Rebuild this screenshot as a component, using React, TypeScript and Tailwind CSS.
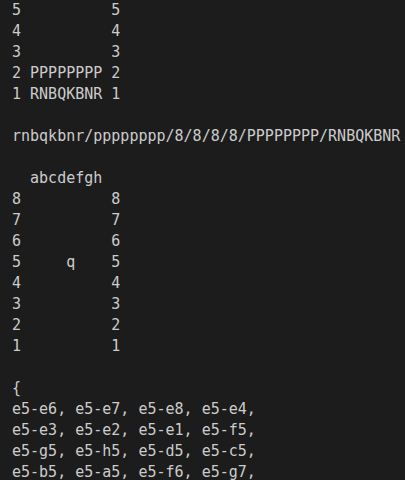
const lines = [
  '5          5',
  '4          4',
  '3          3',
  '2 PPPPPPPP 2',
  '1 RNBQKBNR 1',
  '',
  'rnbqkbnr/pppppppp/8/8/8/8/PPPPPPPP/RNBQKBNR',
  '',
  '  abcdefgh',
  '8          8',
  '7          7',
  '6          6',
  '5     q    5',
  '4          4',
  '3          3',
  '2          2',
  '1          1',
  '',
  '{',
  'e5-e6, e5-e7, e5-e8, e5-e4,',
  'e5-e3, e5-e2, e5-e1, e5-f5,',
  'e5-g5, e5-h5, e5-d5, e5-c5,',
  'e5-b5, e5-a5, e5-f6, e5-g7,',
];

const App = () => {
  return (
    <div className="w-[405px] h-[480px] overflow-hidden bg-[#1c1c1c] text-[#cccccc] pl-3">
      <pre className="font-['DejaVu_Sans_Mono',monospace] text-[15px] leading-[21px] whitespace-pre">
        {lines.map((line, i) => (
          <div key={i} className="h-[21px]">
            {line}
          </div>
        ))}
      </pre>
    </div>
  );
};

export default App;
